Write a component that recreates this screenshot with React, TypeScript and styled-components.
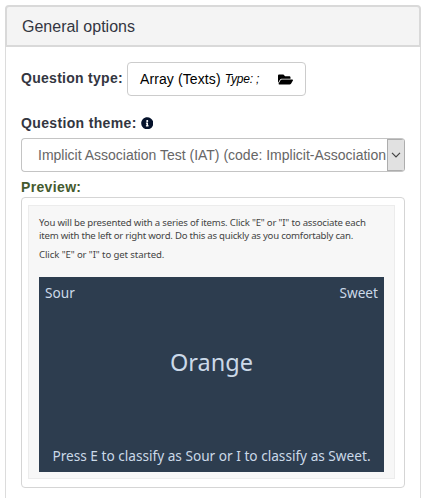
import React from "react";
import styled, { createGlobalStyle } from "styled-components";
import { FaFolderOpen, FaInfoCircle } from "react-icons/fa";

const GlobalStyle = createGlobalStyle`
  * { box-sizing: border-box; }
  body { margin: 0; background: #fff; font-family: "Liberation Sans", Arial, sans-serif; }
`;

const Page = styled.main`
  height: 498px;
  padding: 5px 9px 0 5px;
  overflow: hidden;
`;

const Panel = styled.section`
  height: 520px;
  display: flex;
  flex-direction: column;
`;

const PanelHeader = styled.header`
  height: 42px;
  border: 2px solid #d9d9d9;
  border-radius: 4px 4px 0 0;
  background: #f4f4f4;
  padding: 0 15px;
  font-size: 16px;
  line-height: 39px;
  color: #333641;
`;

const PanelBody = styled.div`
  flex: 1;
  border: solid #dcdcdc;
  border-width: 0 1px;
  padding: 15px 15px 0;
`;

const Row = styled.div`
  display: flex;
  align-items: center;
`;

const ThemeRow = styled(Row)`
  height: 20px;
  margin-top: 17px;
`;

const Label = styled.label<{ $tone?: string }>`
  font-size: 14px;
  font-weight: bold;
  line-height: 20px;
  letter-spacing: 0.35px;
  color: ${(p) => p.$tone ?? "#333641"};
  white-space: nowrap;
`;

const TypeLabel = styled(Label)`
  margin-top: -2px;
  letter-spacing: 0.28px;
`;

const TypeButton = styled.button`
  width: 179px;
  height: 34px;
  margin-left: auto;
  margin-right: 99px;
  padding: 0 12px;
  display: flex;
  align-items: center;
  border: 1px solid #ccc;
  border-radius: 4px;
  background: #fff;
  color: #000;
  font: 14px "Liberation Sans", Arial, sans-serif;
  letter-spacing: 0.1px;
  white-space: nowrap;
`;

const TypeCode = styled.em`
  margin-left: 4px;
  font-size: 12px;
  letter-spacing: -0.2px;
`;

const FolderIcon = styled(FaFolderOpen)`
  margin-left: auto;
`;

const InfoIcon = styled(FaInfoCircle)`
  margin-left: 4px;
  color: #05122b;
`;

const Select = styled.div`
  height: 34px;
  margin-top: 5px;
  padding-left: 16px;
  display: flex;
  border: 1px solid #c4c4c4;
  border-right-color: #adadad;
  border-radius: 4px;
  color: #666;
  font-size: 14px;
  line-height: 33px;
  white-space: nowrap;
  overflow: hidden;
`;

const SelectText = styled.span`
  flex: 1;
  overflow: hidden;
`;

const SelectArrow = styled.span`
  width: 17px;
  display: flex;
  align-items: center;
  justify-content: center;
  border: 1px solid #adadad;
  border-right-width: 0;
  background: #e1e1e1;
`;

const PreviewLabel = styled.div`
  height: 25px;
  padding-top: 5px;
  display: flex;
`;

const PreviewFrame = styled.div`
  height: 291px;
  padding: 7px 9px 8px 6px;
  border: 1px solid #d5d5d5;
  border-radius: 4px;
`;

const PreviewCard = styled.div`
  height: 274px;
  padding: 10px 10px 0;
  border: 1px solid #ececec;
  background: #f7f7f7;
  color: #444;
  font: 9.6px/13px "Noto Sans", sans-serif;
`;

const Instructions = styled.div`
  height: 61px;
`;

const Line = styled.div<{ $spacing: number }>`
  white-space: nowrap;
  letter-spacing: ${(p) => p.$spacing}px;
`;

const StartLine = styled(Line)`
  margin-top: 6px;
`;

const Stage = styled.div`
  height: 195px;
  padding: 6px 6px;
  display: flex;
  flex-direction: column;
  background: #2d3d4f;
  color: #cbd9e8;
  font-size: 13.65px;
  line-height: 20px;
`;

const Categories = styled.div`
  display: flex;
  justify-content: space-between;
`;

const Stimulus = styled.div`
  margin-top: 43px;
  text-align: center;
  font-size: 23.5px;
  line-height: 32px;
`;

const Hint = styled.div`
  margin-top: auto;
  text-align: center;
  white-space: nowrap;
`;

export default function App() {
  return (
    <>
      <GlobalStyle />
      <Page>
        <Panel>
          <PanelHeader>General options</PanelHeader>
          <PanelBody>
            <Row>
              <TypeLabel>Question type:</TypeLabel>
              <TypeButton>
                Array (Texts)
                <TypeCode>Type: ;</TypeCode>
                <FolderIcon size={15} />
              </TypeButton>
            </Row>
            <ThemeRow>
              <Label>Question theme:</Label>
              <InfoIcon size={12.5} />
            </ThemeRow>
            <Select>
              <SelectText>Implicit Association Test (IAT) (code: Implicit-Association</SelectText>
              <SelectArrow>
                <svg width="10" height="6" viewBox="0 0 10 6" fill="none" stroke="#444" strokeWidth="1.2">
                  <path d="M1 .8l4 4 4-4" />
                </svg>
              </SelectArrow>
            </Select>
            <PreviewLabel>
              <Label $tone="#445a2e">Preview:</Label>
            </PreviewLabel>
            <PreviewFrame>
              <PreviewCard>
                <Instructions>
                  <Line $spacing={-0.18}>
                    You will be presented with a series of items. Click "E" or "I" to associate each
                  </Line>
                  <Line $spacing={-0.23}>
                    item with the left or right word. Do this as quickly as you comfortably can.
                  </Line>
                  <StartLine $spacing={-0.1}>Click "E" or "I" to get started.</StartLine>
                </Instructions>
                <Stage>
                  <Categories>
                    <span>Sour</span>
                    <span>Sweet</span>
                  </Categories>
                  <Stimulus>Orange</Stimulus>
                  <Hint>Press E to classify as Sour or I to classify as Sweet.</Hint>
                </Stage>
              </PreviewCard>
            </PreviewFrame>
          </PanelBody>
        </Panel>
      </Page>
    </>
  );
}
